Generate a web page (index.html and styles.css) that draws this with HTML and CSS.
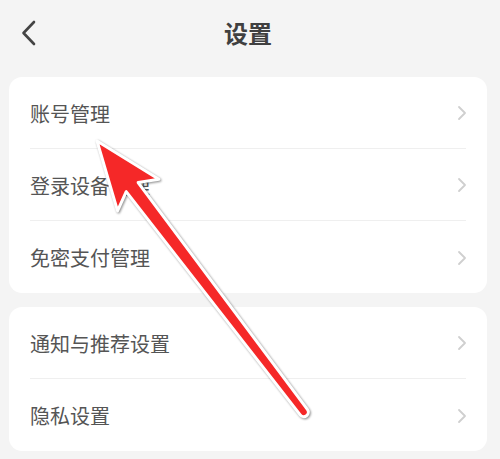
FILE: index.html
```html
<!DOCTYPE html>
<html lang="zh-CN">
<head>
<meta charset="utf-8">
<title>设置</title>
<link rel="stylesheet" href="styles.css">
</head>
<body>
<div class="page">
  <header class="topbar">
    <div class="back">
      <svg width="16" height="26" viewBox="0 0 16 26"><path d="M13 2 L2.5 13 L13 24" fill="none" stroke="#444" stroke-width="2.6" stroke-linecap="round" stroke-linejoin="round"/></svg>
    </div>
    <h1 class="title">设置</h1>
    <div></div>
  </header>

  <section class="card">
    <div class="row"><div class="row-inner"><span>账号管理</span><svg class="chev" width="10" height="16" viewBox="0 0 10 16"><path d="M2 2 L8 8 L2 14" fill="none" stroke="#cfcfcf" stroke-width="1.8" stroke-linecap="round" stroke-linejoin="round"/></svg></div></div>
    <div class="row"><div class="row-inner"><span>登录设备管理</span><svg class="chev" width="10" height="16" viewBox="0 0 10 16"><path d="M2 2 L8 8 L2 14" fill="none" stroke="#cfcfcf" stroke-width="1.8" stroke-linecap="round" stroke-linejoin="round"/></svg></div></div>
    <div class="row last"><div class="row-inner"><span>免密支付管理</span><svg class="chev" width="10" height="16" viewBox="0 0 10 16"><path d="M2 2 L8 8 L2 14" fill="none" stroke="#cfcfcf" stroke-width="1.8" stroke-linecap="round" stroke-linejoin="round"/></svg></div></div>
  </section>

  <section class="card">
    <div class="row"><div class="row-inner"><span>通知与推荐设置</span><svg class="chev" width="10" height="16" viewBox="0 0 10 16"><path d="M2 2 L8 8 L2 14" fill="none" stroke="#cfcfcf" stroke-width="1.8" stroke-linecap="round" stroke-linejoin="round"/></svg></div></div>
    <div class="row last"><div class="row-inner"><span>隐私设置</span><svg class="chev" width="10" height="16" viewBox="0 0 10 16"><path d="M2 2 L8 8 L2 14" fill="none" stroke="#cfcfcf" stroke-width="1.8" stroke-linecap="round" stroke-linejoin="round"/></svg></div></div>
  </section>
</div>

<svg class="arrow" width="500" height="459" viewBox="0 0 500 459">
  <g transform="translate(97,141) rotate(52.67)">
    <path d="M0,0 L68,-26 L58,-7.5 L341,-4.5 A4.5,4.5 0 0 1 341,4.5 L58,7.5 L68,26 Z" fill="#f52828" stroke="#ffffff" stroke-width="3" stroke-linejoin="round"/>
  </g>
</svg>
</body>
</html>
```

FILE: styles.css
```css
html, body {
  margin: 0;
  padding: 0;
  background: #f4f4f4;
}
body {
  width: 500px;
  height: 459px;
  overflow: hidden;
  position: relative;
  font-family: "Noto Sans CJK SC", "Noto Sans", sans-serif;
}
.page {
  width: 478px;
  padding-left: 9px;
  display: flex;
  flex-direction: column;
}
.topbar {
  height: 68px;
  margin-bottom: 9px;
  display: grid;
  grid-template-columns: 1fr auto 1fr;
  align-items: center;
}
.back {
  padding-left: 12px;
  display: flex;
  align-items: center;
  padding-bottom: 2px;
}
.title {
  margin: 0;
  font-size: 24px;
  font-weight: 700;
  color: #404040;
  line-height: 1;
  padding-bottom: 2px;
}
.card {
  background: #ffffff;
  border-radius: 13px;
  margin-bottom: 14px;
}
.row {
  height: 72px;
  padding: 0 21px;
  box-sizing: border-box;
}
.row-inner {
  height: 100%;
  display: flex;
  align-items: center;
  justify-content: space-between;
  border-bottom: 1px solid #efefef;
  box-sizing: border-box;
  font-size: 20px;
  color: #555555;
  padding-top: 1px;
}
.row.last .row-inner {
  border-bottom: none;
}
.chev {
  margin-right: -1px;
}
.arrow {
  position: absolute;
  left: 0;
  top: 0;
  filter: drop-shadow(1px 1px 1.2px rgba(0,0,0,0.45));
}
```
